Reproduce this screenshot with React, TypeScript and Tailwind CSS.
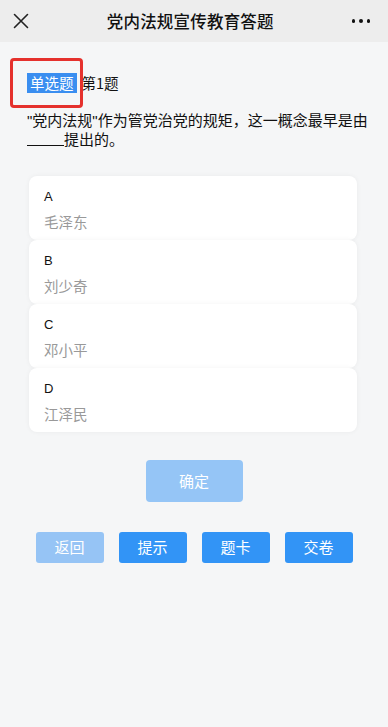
import React from 'react';

const options = [
  { key: 'A', text: '毛泽东' },
  { key: 'B', text: '刘少奇' },
  { key: 'C', text: '邓小平' },
  { key: 'D', text: '江泽民' },
];

const actions = [
  { label: '返回', disabled: true },
  { label: '提示', disabled: false },
  { label: '题卡', disabled: false },
  { label: '交卷', disabled: false },
];

export default function App() {
  return (
    <div className="min-h-[727px] bg-[#f5f6f7] font-['Noto_Sans_CJK_SC','Noto_Sans',sans-serif] text-[#111]">
      {/* top bar */}
      <header className="h-[42px] bg-[#ededed] flex items-center justify-between px-[12px]">
        <svg width="16" height="16" viewBox="0 0 16 16" className="ml-[1px]">
          <path d="M1.5 1.5 L14.5 14.5 M14.5 1.5 L1.5 14.5" stroke="#222" strokeWidth="1.6" strokeLinecap="round" />
        </svg>
        <h1 className="text-[16.5px] font-medium leading-none tracking-[0.2px]">党内法规宣传教育答题</h1>
        <div className="flex gap-[4px] mr-[6px]">
          <span className="w-[3.5px] h-[3.5px] rounded-full bg-[#111]" />
          <span className="w-[3.5px] h-[3.5px] rounded-full bg-[#111]" />
          <span className="w-[3.5px] h-[3.5px] rounded-full bg-[#111]" />
        </div>
      </header>

      <main className="relative">
        {/* annotation box */}
        <div className="absolute left-[10px] top-[16px] w-[73px] h-[50px] border-[3px] border-[#e5312d] rounded-[4px]" />

        <section className="pl-[27px] pr-[20px] pt-[31px]">
          <div className="flex items-center h-[20px]">
            <span className="bg-[#3a8ef0] text-white text-[14.5px] leading-[20px] px-[3px]">单选题</span>
            <span className="ml-[5px] text-[14.5px] leading-[20px]">第1题</span>
          </div>
          <div className="mt-[18px] text-[15px] leading-[18px] text-[#111]">
            <div className="whitespace-nowrap">
              <span className="font-['Liberation_Sans',sans-serif]">"</span>党内法规<span className="font-['Liberation_Sans',sans-serif]">"</span>作为管党治党的规矩，这一概念最早是由
            </div>
            <div className="flex items-end">
              <span className="w-[37px] h-[14px] border-b border-[#111] mb-[2px]" />
              <span>提出的。</span>
            </div>
          </div>
        </section>

        {/* options */}
        <div className="mx-[29px] mt-[28px] w-[328px] flex flex-col">
          {options.map((o) => (
            <div key={o.key} className="h-[64px] bg-white rounded-[8px] shadow-[0_0_5px_rgba(0,0,0,0.05)] pl-[15px] pt-[12px]">
              <div className="text-[13px] leading-[18px] text-[#111] font-['Liberation_Sans',sans-serif]">{o.key}</div>
              <div className="mt-[7px] text-[14.5px] leading-[18px] text-[#999]">{o.text}</div>
            </div>
          ))}
        </div>

        <div className="flex justify-center mt-[28px]">
          <button className="w-[97px] h-[42px] rounded-[4px] bg-[#95c5f6] text-white text-[15px]">确定</button>
        </div>

        <div className="flex justify-center gap-[15px] mt-[30px]">
          {actions.map((a) => (
            <button
              key={a.label}
              className={
                a.disabled
                  ? 'w-[68px] h-[31px] rounded-[3px] bg-[#96c4f5] text-white text-[15px]'
                  : 'w-[68px] h-[31px] rounded-[3px] bg-[#3294f6] text-white text-[15px]'
              }
            >
              {a.label}
            </button>
          ))}
        </div>
      </main>
    </div>
  );
}
